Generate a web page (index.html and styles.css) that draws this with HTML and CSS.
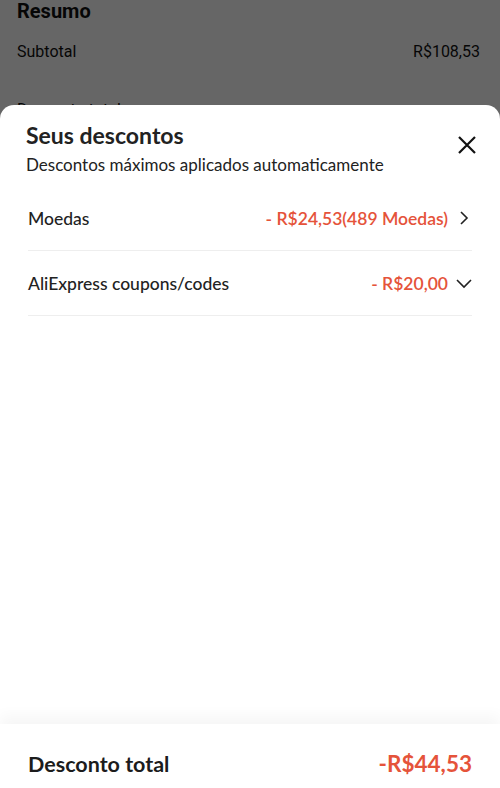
FILE: index.html
```html
<!DOCTYPE html>
<html lang="pt-BR">
<head>
  <meta charset="UTF-8" />
  <meta name="viewport" content="width=device-width, initial-scale=1.0" />
  <title>Seus descontos</title>
  <link rel="stylesheet" href="styles.css">
</head>
<body>

  <section class="resumo">
    <h2>Resumo</h2>
    <div class="resumo-row"><span>Subtotal</span><span>R$108,53</span></div>
    <div class="resumo-row"><span>Desconto total</span><span></span></div>
  </section>

  <div class="overlay"></div>

  <div class="sheet">
    <header class="sheet-head">
      <div>
        <h1>Seus descontos</h1>
        <p>Descontos máximos aplicados automaticamente</p>
      </div>
      <button class="close" aria-label="Fechar">
        <svg width="20" height="20" viewBox="0 0 20 20"><path d="M2 2L18 18M18 2L2 18" stroke="#111" stroke-width="2.2" fill="none"/></svg>
      </button>
    </header>

    <ul class="discounts">
      <li>
        <span class="label">Moedas</span>
        <span class="value">- R$24,53(489 Moedas)</span>
        <svg class="arrow" width="12" height="16" viewBox="0 0 12 16"><path d="M3 2L9 8L3 14" stroke="#222" stroke-width="1.6" fill="none"/></svg>
      </li>
      <li>
        <span class="label">AliExpress coupons/codes</span>
        <span class="value">- R$20,00</span>
        <svg class="arrow" width="16" height="12" viewBox="0 0 16 12"><path d="M1 3L8 10L15 3" stroke="#222" stroke-width="1.6" fill="none"/></svg>
      </li>
    </ul>

    <footer class="sheet-foot">
      <span>Desconto total</span>
      <span class="total">-R$44,53</span>
    </footer>
  </div>

</body>
</html>
```

FILE: styles.css
```css
html, body {
  margin: 0;
  height: 100%;
}

body {
  font-family: Roboto, "Liberation Sans", sans-serif;
  background-color: #fff;
  color: #111;
  position: relative;
  overflow: hidden;
}

.resumo {
  padding: 0 20px 0 17px;
}

.resumo h2 {
  margin: 0;
  font-size: 20px;
  font-weight: 700;
  line-height: 22px;
}

.resumo-row {
  display: flex;
  justify-content: space-between;
  font-size: 16px;
  margin-top: 19px;
  line-height: 22px;
}

.resumo-row + .resumo-row {
  margin-top: 36px;
}

.overlay {
  position: absolute;
  inset: 0;
  background-color: rgba(0, 0, 0, 0.6);
}

.sheet {
  position: absolute;
  left: 0;
  right: 0;
  top: 105px;
  bottom: 0;
  background-color: #fff;
  border-radius: 14px 14px 0 0;
  display: flex;
  flex-direction: column;
  font-family: Lato, "Open Sans", sans-serif;
  color: #222;
}

.sheet-head {
  display: flex;
  justify-content: space-between;
  align-items: flex-start;
  padding: 16px 22px 0 26px;
}

.sheet-head h1 {
  margin: 0;
  font-size: 23px;
  font-weight: 700;
  line-height: 29px;
}

.sheet-head p {
  margin: 4px 0 0;
  font-size: 17px;
  line-height: 22px;
}

.close {
  background: none;
  border: none;
  padding: 0;
  margin-top: 13px;
  width: 22px;
  height: 22px;
  display: flex;
  align-items: center;
  justify-content: center;
}

.discounts {
  list-style: none;
  margin: 10px 28px 0;
  padding: 0;
}

.discounts li {
  display: flex;
  align-items: center;
  height: 64px;
  border-bottom: 1px solid #eeeeee;
  font-size: 17.5px;
}

.discounts .label {
  flex: 1;
  font-weight: 500;
  color: #222;
}

.discounts .value {
  color: #e5533a;
  font-weight: 600;
}

.discounts .arrow {
  margin-left: 8px;
  width: 16px;
  display: block;
}

.sheet-foot {
  margin-top: auto;
  padding: 28px 28px 12px;
  line-height: 24px;
  display: flex;
  justify-content: space-between;
  align-items: center;
  box-shadow: 0 -8px 14px rgba(0, 0, 0, 0.04);
  font-size: 21.5px;
  font-weight: 700;
  color: #1c1c1c;
}

.sheet-foot .total {
  color: #e5533a;
  font-size: 22.5px;
}
```
